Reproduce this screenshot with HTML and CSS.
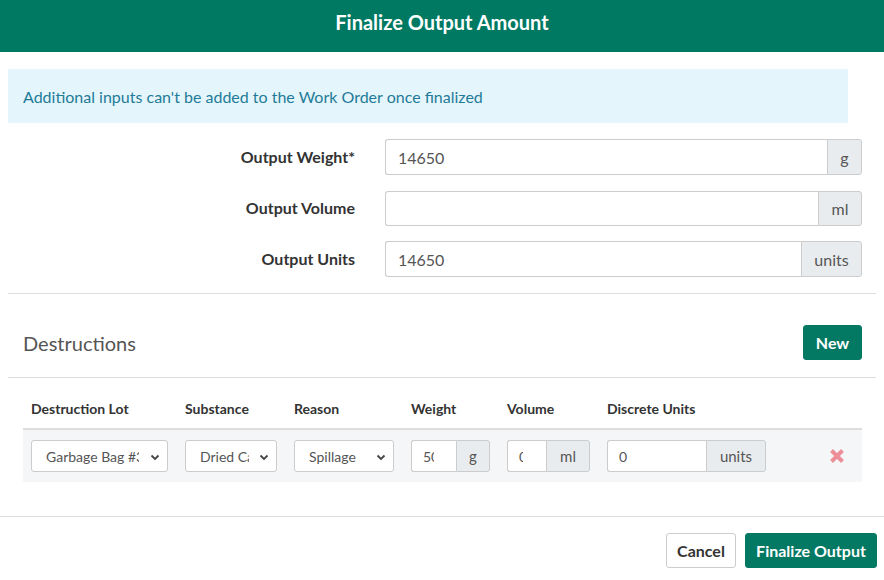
FILE: index.html
```html
<!DOCTYPE html>
<html>
<head>
<meta charset="utf-8">
<link rel="stylesheet" href="styles.css">
</head>
<body>
<div class="modal">
  <div class="modal-header">Finalize Output Amount</div>
  <div class="modal-body">
    <div class="alert">Additional inputs can't be added to the Work Order once finalized</div>
    <div class="form">
      <div class="form-row">
        <div class="label">Output Weight*</div>
        <div class="group">
          <div class="field">14650</div>
          <div class="addon addon-g">g</div>
        </div>
      </div>
      <div class="form-row r2">
        <div class="label">Output Volume</div>
        <div class="group">
          <div class="field"></div>
          <div class="addon addon-ml">ml</div>
        </div>
      </div>
      <div class="form-row r3">
        <div class="label">Output Units</div>
        <div class="group">
          <div class="field">14650</div>
          <div class="addon addon-units">units</div>
        </div>
      </div>
    </div>
    <div class="divider"></div>
    <div class="section-head">
      <div class="section-title">Destructions</div>
      <button class="btn btn-primary btn-new">New</button>
    </div>
    <div class="divider"></div>
    <div class="table">
      <div class="grid thead">
        <div>Destruction Lot</div>
        <div>Substance</div>
        <div>Reason</div>
        <div>Weight</div>
        <div>Volume</div>
        <div>Discrete Units</div>
        <div></div>
      </div>
      <div class="grid trow">
        <div class="select"><span class="sel-text w1">Garbage Bag #3</span><svg class="chev" width="10" height="7" viewBox="0 0 10 7"><path d="M1.5 1.5 L5 5 L8.5 1.5" fill="none" stroke="#444" stroke-width="1.8"/></svg></div>
        <div class="select"><span class="sel-text w2">Dried Cannabis</span><svg class="chev" width="10" height="7" viewBox="0 0 10 7"><path d="M1.5 1.5 L5 5 L8.5 1.5" fill="none" stroke="#444" stroke-width="1.8"/></svg></div>
        <div class="select"><span class="sel-text w3">Spillage</span><svg class="chev" width="10" height="7" viewBox="0 0 10 7"><path d="M1.5 1.5 L5 5 L8.5 1.5" fill="none" stroke="#444" stroke-width="1.8"/></svg></div>
        <div class="igroup">
          <div class="ifield"><span class="clip c1">500</span></div>
          <div class="iaddon a-g">g</div>
        </div>
        <div class="igroup">
          <div class="ifield"><span class="clip c2">0</span></div>
          <div class="iaddon a-ml">ml</div>
        </div>
        <div class="igroup">
          <div class="ifield">0</div>
          <div class="iaddon a-units">units</div>
        </div>
        <div class="del">
          <svg width="16" height="16" viewBox="0 0 16 16"><path d="M2.5 2.5 L13.5 13.5 M13.5 2.5 L2.5 13.5" stroke="#ec8f99" stroke-width="4" stroke-linecap="butt"/></svg>
        </div>
      </div>
    </div>
  </div>
  <div class="modal-footer">
    <button class="btn btn-default">Cancel</button>
    <button class="btn btn-primary btn-final">Finalize Output</button>
  </div>
</div>
</body>
</html>
```
FILE: styles.css
```css
* { box-sizing: border-box; }
body {
  margin: 0;
  font-family: Lato, "Open Sans", "Liberation Sans", sans-serif;
  color: #333;
  background: #fff;
}
.modal { width: 884px; }
.modal-header {
  height: 52px;
  background: #007963;
  color: #fff;
  font-weight: 700;
  font-size: 20px;
  display: flex;
  align-items: center;
  justify-content: center;
  padding-bottom: 8px;
}
.modal-body { padding: 17px 8px 0 8px; }
.alert {
  width: 840px;
  height: 54px;
  background: #e4f6fb;
  color: #1f7b99;
  font-size: 16px;
  display: flex;
  align-items: center;
  padding: 0 15px 0 15px;
}
.form { padding: 16px 14px 0 0; }
.form-row {
  display: flex;
  align-items: center;
  height: 36px;
}
.form-row.r2 { margin-top: 16px; height: 35px; }
.form-row.r3 { margin-top: 15px; }
.label {
  width: 347px;
  text-align: right;
  font-weight: 700;
  font-size: 16px;
  color: #333;
  padding-bottom: 2px;
}
.group {
  margin-left: 30px;
  flex: 1;
  display: flex;
  height: 100%;
}
.field {
  flex: 1;
  border: 1px solid #ccc;
  border-right: none;
  border-radius: 3px 0 0 3px;
  font-size: 16px;
  color: #555;
  padding: 0 12px;
  display: flex;
  align-items: center;
}
.addon {
  background: #e9ecef;
  border: 1px solid #ccc;
  border-radius: 0 3px 3px 0;
  color: #555;
  font-size: 16px;
  display: flex;
  align-items: center;
  justify-content: center;
}
.addon-g { width: 35px; }
.addon-ml { width: 44px; }
.addon-units { width: 61px; }
.divider {
  height: 1px;
  background: #ddd;
  margin-top: 16px;
}
.section-head {
  display: flex;
  align-items: center;
  justify-content: space-between;
  height: 83px;
  padding: 14px 14px 0 15px;
}
.section-title {
  font-size: 20px;
  color: #555;
  font-weight: 400;
}
.section-head + .divider { margin-top: 0; }
.btn {
  font-family: Lato, "Open Sans", "Liberation Sans", sans-serif;
  font-weight: 700;
  font-size: 16px;
  height: 35px;
  border-radius: 3px;
  cursor: pointer;
  padding: 0;
}
.btn-primary {
  background: #037863;
  border: 1px solid #037863;
  color: #fff;
}
.btn-new { width: 59px; }
.btn-default {
  background: #fff;
  border: 1px solid #ccc;
  color: #333;
  width: 70px;
}
.btn-final { width: 132px; margin-left: 9px; }
.table { margin: 0 14px 0 15px; }
.grid {
  display: grid;
  grid-template-columns: 137px 92px 100px 79px 83px 159px 1fr;
  column-gap: 17px;
  padding-left: 8px;
}
.thead {
  height: 50px;
  align-items: center;
  font-weight: 700;
  font-size: 14px;
  color: #333;
  padding-top: 10px;
}
.trow {
  background: #f5f6f8;
  border-top: 2px solid #dedede;
  height: 54px;
  align-items: center;
}
.select {
  height: 32px;
  background: #fff;
  border: 1px solid #ccc;
  border-radius: 3px;
  display: flex;
  align-items: center;
  padding-left: 14px;
  font-size: 14px;
  color: #555;
  position: relative;
}
.sel-text { display: block; overflow: hidden; white-space: nowrap; }
.w1 { width: 93px; }
.w2 { width: 49px; }
.w3 { width: 60px; }
.chev { position: absolute; right: 7px; top: 13px; }
.igroup { display: flex; height: 32px; }
.ifield {
  flex: 1;
  background: #fff;
  border: 1px solid #ccc;
  border-right: none;
  border-radius: 3px 0 0 3px;
  font-size: 14px;
  color: #555;
  padding-left: 11px;
  display: flex;
  align-items: center;
}
.clip { display: block; overflow: hidden; white-space: nowrap; }
.c1 { width: 11px; }
.c2 { width: 4px; }
.iaddon {
  background: #e9ecef;
  border: 1px solid #ccc;
  border-radius: 0 3px 3px 0;
  font-size: 15px;
  color: #555;
  display: flex;
  align-items: center;
  justify-content: center;
}
.a-g { width: 34px; }
.a-ml { width: 44px; }
.a-units { width: 60px; }
.del {
  display: flex;
  align-items: center;
  justify-content: flex-end;
  padding-right: 17px;
}
.modal-footer {
  margin-top: 34px;
  border-top: 1px solid #ddd;
  display: flex;
  justify-content: flex-end;
  padding: 16px 7px 0 0;
}
```
